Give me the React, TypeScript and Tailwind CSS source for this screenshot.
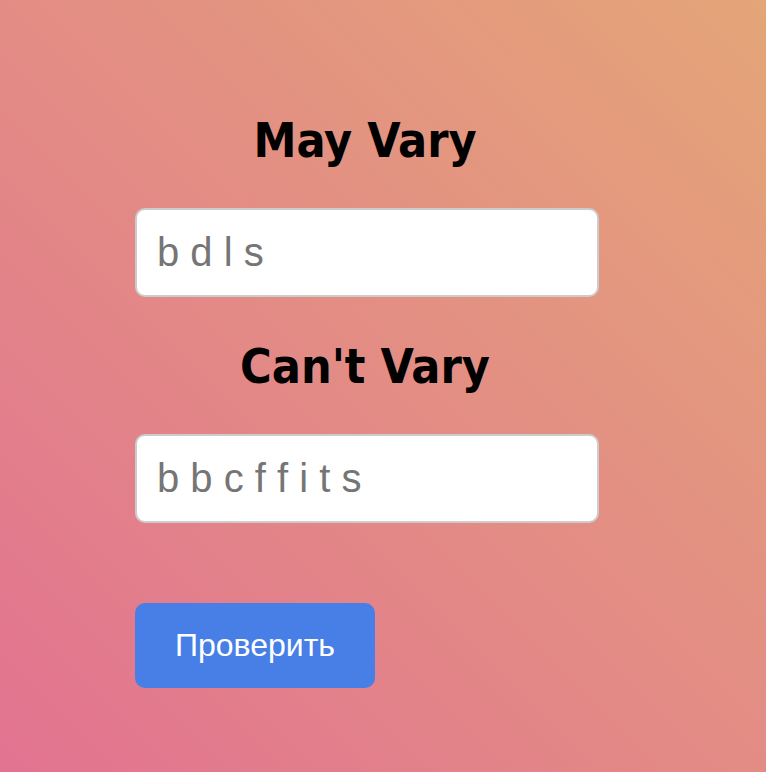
export default function App() {
  return (
    <main className="min-h-screen bg-linear-[45deg,#e27391,#e4a578] px-[135px] pt-[112px] font-['Liberation_Sans',Arial,sans-serif]">
      <form className="flex max-w-[464px] flex-col" onSubmit={(e) => e.preventDefault()}>
        <label htmlFor="may-vary" className="pr-1 text-center font-['DejaVu_Sans_Condensed','DejaVu_Sans',sans-serif] text-[48px] leading-[56px] font-bold text-black">May Vary</label>
        <input id="may-vary" type="text" placeholder="b d l s" className="mt-10 h-[89px] w-full rounded-[10px] border-2 border-[#cccccc] bg-white px-5 text-[40px] placeholder:text-[#757575]" />
        <label htmlFor="cant-vary" className="mt-[41px] pr-1 text-center font-['DejaVu_Sans_Condensed','DejaVu_Sans',sans-serif] text-[48px] leading-[56px] font-bold text-black">Can't Vary</label>
        <input id="cant-vary" type="text" placeholder="b b c f f i t s" className="mt-10 h-[89px] w-full rounded-[10px] border-2 border-[#cccccc] bg-white px-5 text-[40px] placeholder:text-[#757575]" />
        <button type="submit" className="mt-20 h-[85px] self-start rounded-[10px] bg-[#477fe6] px-10 pb-0.5 text-[32px] text-white">Проверить</button>
      </form>
    </main>
  );
}
